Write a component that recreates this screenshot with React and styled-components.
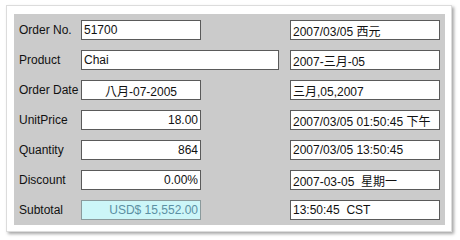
import React from 'react'
import styled, { createGlobalStyle } from 'styled-components'

const GlobalStyle = createGlobalStyle`
  html, body {
    margin: 0;
    padding: 0;
    background: #fff;
  }
  body {
    width: 460px;
    height: 240px;
    overflow: hidden;
    font-family: "Liberation Sans", Arial, "Noto Sans CJK TC", sans-serif;
  }
`;

const Card = styled.div`
  margin: 5px 0 0 6px;
  width: 446px;
  height: 227px;
  box-sizing: border-box;
  padding: 8px 6px 6px 7px;
  background: #fff;
  border: 1px solid #dcdcdc;
  box-shadow: 2px 2px 3px rgba(0, 0, 0, 0.35);
`;

const Panel = styled.div`
  background: #cbcbcb;
  height: 211px;
  box-sizing: border-box;
  padding: 6px 0 0 5px;
  display: grid;
  grid-template-columns: 62px 209px 150px;
  grid-auto-rows: 20px;
  row-gap: 10px;
  align-items: center;
`;

const Label = styled.div`
  font-size: 12px;
  color: #111;
  white-space: nowrap;
`;

const Field = styled.input`
  box-sizing: border-box;
  width: ${p => p.$w}px;
  height: 20px;
  margin: 0;
  padding: 0 2px;
  border: 1px solid ${p => (p.$tint ? '#8a9a9c' : '#5a5a5a')};
  background: ${p => (p.$tint ? '#ccf6f8' : '#fff')};
  color: ${p => (p.$tint ? '#5b8fa3' : '#111')};
  font-family: "Liberation Sans", Arial, "Noto Sans CJK TC", sans-serif;
  font-size: 12px;
  text-align: ${p => p.$align || 'left'};
  outline: none;
`;

const rows = [
  { label: 'Order No.', value: '51700', right: '2007/03/05 西元' },
  { label: 'Product', value: 'Chai', w: 198, right: '2007-三月-05' },
  { label: 'Order Date', value: '八月-07-2005', align: 'center', right: '三月,05,2007' },
  { label: 'UnitPrice', value: '18.00', align: 'right', right: '2007/03/05 01:50:45 下午' },
  { label: 'Quantity', value: '864', align: 'right', right: '2007/03/05 13:50:45' },
  { label: 'Discount', value: '0.00%', align: 'right', right: '2007-03-05  星期一' },
  { label: 'Subtotal', value: 'USD$ 15,552.00', align: 'right', tint: true, right: '13:50:45  CST' },
];

export default function App() {
  return (
    <>
      <GlobalStyle />
      <Card>
        <Panel>
          {rows.map(r => (
            <React.Fragment key={r.label}>
              <Label>{r.label}</Label>
              <Field readOnly value={r.value} $w={r.w || 120} $align={r.align} $tint={r.tint} />
              <Field readOnly value={r.right.replace(/  /g, '\u00a0 ')} $w={150} />
            </React.Fragment>
          ))}
        </Panel>
      </Card>
    </>
  )
}
